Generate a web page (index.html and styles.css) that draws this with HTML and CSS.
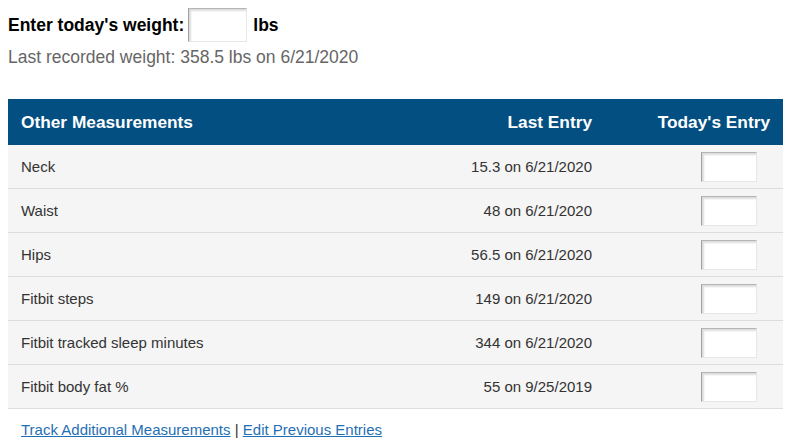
FILE: index.html
```html
<!DOCTYPE html>
<html lang="en">
<head>
<meta charset="utf-8">
<title>Weight entry</title>
<link rel="stylesheet" href="styles.css">
</head>
<body>
<div class="weight-row">
  <label class="weight-label" for="w">Enter today's weight:</label>
  <input class="field field-weight" id="w" type="text">
  <span class="weight-unit">lbs</span>
</div>
<div class="last">Last recorded weight: 358.5 lbs on 6/21/2020</div>

<div class="table">
  <div class="row head">
    <div class="cell">Other Measurements</div>
    <div class="cell right">Last Entry</div>
    <div class="cell right">Today's Entry</div>
  </div>
  <div class="row">
    <div class="cell">Neck</div>
    <div class="cell right">15.3 on 6/21/2020</div>
    <div class="cell right"><input class="field field-row" type="text"></div>
  </div>
  <div class="row">
    <div class="cell">Waist</div>
    <div class="cell right">48 on 6/21/2020</div>
    <div class="cell right"><input class="field field-row" type="text"></div>
  </div>
  <div class="row">
    <div class="cell">Hips</div>
    <div class="cell right">56.5 on 6/21/2020</div>
    <div class="cell right"><input class="field field-row" type="text"></div>
  </div>
  <div class="row">
    <div class="cell">Fitbit steps</div>
    <div class="cell right">149 on 6/21/2020</div>
    <div class="cell right"><input class="field field-row" type="text"></div>
  </div>
  <div class="row">
    <div class="cell">Fitbit tracked sleep minutes</div>
    <div class="cell right">344 on 6/21/2020</div>
    <div class="cell right"><input class="field field-row" type="text"></div>
  </div>
  <div class="row">
    <div class="cell">Fitbit body fat %</div>
    <div class="cell right">55 on 9/25/2019</div>
    <div class="cell right"><input class="field field-row" type="text"></div>
  </div>
</div>

<div class="links">
  <a href="#">Track Additional Measurements</a> <span class="sep">|</span> <a href="#">Edit Previous Entries</a>
</div>
</body>
</html>
```

FILE: styles.css
```css
html, body {
  background: #ffffff;
}
body {
  margin: 8px 12px 8px 8px;
  font-family: "Liberation Sans", Arial, sans-serif;
  color: #333333;
}
.weight-row {
  display: flex;
  align-items: center;
  height: 34px;
}
.weight-label {
  font-weight: bold;
  font-size: 17.5px;
  color: #000000;
  margin-right: 4px;
}
.weight-unit {
  font-weight: bold;
  font-size: 17.5px;
  color: #000000;
  margin-left: 6px;
}
.field {
  box-sizing: border-box;
  background: #ffffff;
  border: 1px solid #e6e6e6;
  border-top-color: #b5b5b5;
  border-left-color: #a0a0a0;
  box-shadow: inset 2px 2px 2px rgba(0, 0, 0, 0.14);
  padding: 0 4px;
  font-family: inherit;
  font-size: 15px;
  outline: none;
}
.field-weight {
  width: 59px;
  height: 34px;
}
.field-row {
  width: 56px;
  height: 30px;
  margin-right: 13px;
}
.last {
  margin-top: 5px;
  font-size: 17.5px;
  line-height: 20px;
  color: #666666;
}
.table {
  margin-top: 32px;
}
.row {
  display: grid;
  grid-template-columns: 1fr 200px 178px;
  align-items: center;
  height: 44px;
  background: #f5f5f5;
  border-bottom: 1px solid #dddddd;
  box-sizing: border-box;
  font-size: 15px;
  color: #333333;
}
.row.head {
  height: 46px;
  background: #034f82;
  border-bottom: none;
  color: #ffffff;
  font-weight: bold;
  font-size: 17.3px;
}
.cell {
  padding: 0 13px;
  display: flex;
  align-items: center;
}
.cell.right {
  justify-content: flex-end;
}
.links {
  margin-top: 12px;
  padding-left: 13px;
  font-size: 15px;
  line-height: 18px;
  color: #1f6fb5;
}
.links a {
  color: #1f6fb5;
  text-decoration: underline;
}
.sep {
  color: #333333;
}
```
